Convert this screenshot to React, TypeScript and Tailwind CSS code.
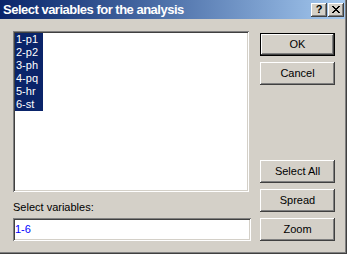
const raised =
  'shadow-[inset_-1px_-1px_#404040,inset_1px_1px_#ffffff,inset_-2px_-2px_#808080,inset_2px_2px_#d4d0c8]';
const sunken =
  'shadow-[inset_1px_1px_#808080,inset_-1px_-1px_#ffffff,inset_2px_2px_#404040,inset_-2px_-2px_#d4d0c8]';

const items = ['1-p1', '2-p2', '3-ph', '4-pq', '5-hr', '6-st'];

function WinButton({ label, isDefault = false }: { label: string; isDefault?: boolean }) {
  if (isDefault) {
    return (
      <div className="h-[23px] w-[75px] border border-black">
        <div className={`flex h-full w-full items-center justify-center text-black ${raised}`}>
          {label}
        </div>
      </div>
    );
  }
  return (
    <div className={`flex h-[23px] w-[75px] items-center justify-center text-black ${raised}`}>
      {label}
    </div>
  );
}

function CaptionButton({ children }: { children: React.ReactNode }) {
  return (
    <div className={`flex h-[14px] w-[16px] items-center justify-center bg-[#d4d0c8] ${raised}`}>
      {children}
    </div>
  );
}

export default function App() {
  return (
    <div
      className="h-[254px] w-[347px] border-b border-r border-[#404040] bg-[#d4d0c8] text-[11px] leading-[13px]"
      style={{ fontFamily: '"Liberation Sans", Arial, sans-serif' }}
    >
      <div className="flex h-full w-full flex-col border-b border-r border-[#808080]">
        {/* title bar */}
        <div className="flex h-[19px] items-center bg-gradient-to-r from-[#0a246a] to-[#a6caf0] pl-[3px] pr-[1px]">
          <span className="flex-1 text-[13px] font-bold tracking-[-0.5px] text-white">
            Select variables for the analysis
          </span>
          <div className="flex gap-[1px]">
            <CaptionButton>
              <span className="text-[11px] font-bold leading-none text-black">?</span>
            </CaptionButton>
            <CaptionButton>
              <svg width="8" height="7" viewBox="0 0 8 7">
                <path d="M0 0h2v1h1v1h2v-1h1v-1h2v1h-1v1h-1v1h-1v1h1v1h1v1h1v1h-2v-1h-1v-1h-2v1h-1v1h-2v-1h1v-1h1v-1h1v-1h-1v-1h-1v-1h-1z" fill="#000" />
              </svg>
            </CaptionButton>
          </div>
        </div>

        {/* body */}
        <div className="flex flex-1 pl-[13px] pt-[12px]">
          <div className="flex w-[238px] flex-col">
            <div className={`h-[161px] w-[236px] bg-white p-[2px] ${sunken}`}>
              {items.map((item) => (
                <div key={item} className="h-[13px] w-[28px] bg-[#0a246a] pl-[1px] text-white">
                  {item}
                </div>
              ))}
            </div>
            <div className="mt-[9px] text-black">Select variables:</div>
            <div className={`mt-[4px] flex h-[23px] w-[238px] items-center bg-white px-[2px] text-[#0000ff] ${sunken}`}>
              1-6
            </div>
          </div>

          <div className="ml-[9px] flex flex-col pt-[2px]">
            <WinButton label="OK" isDefault />
            <div className="mt-[6px]">
              <WinButton label="Cancel" />
            </div>
            <div className="mt-[75px] flex flex-col gap-[6px]">
              <WinButton label="Select All" />
              <WinButton label="Spread" />
              <WinButton label="Zoom" />
            </div>
          </div>
        </div>
      </div>
    </div>
  );
}
